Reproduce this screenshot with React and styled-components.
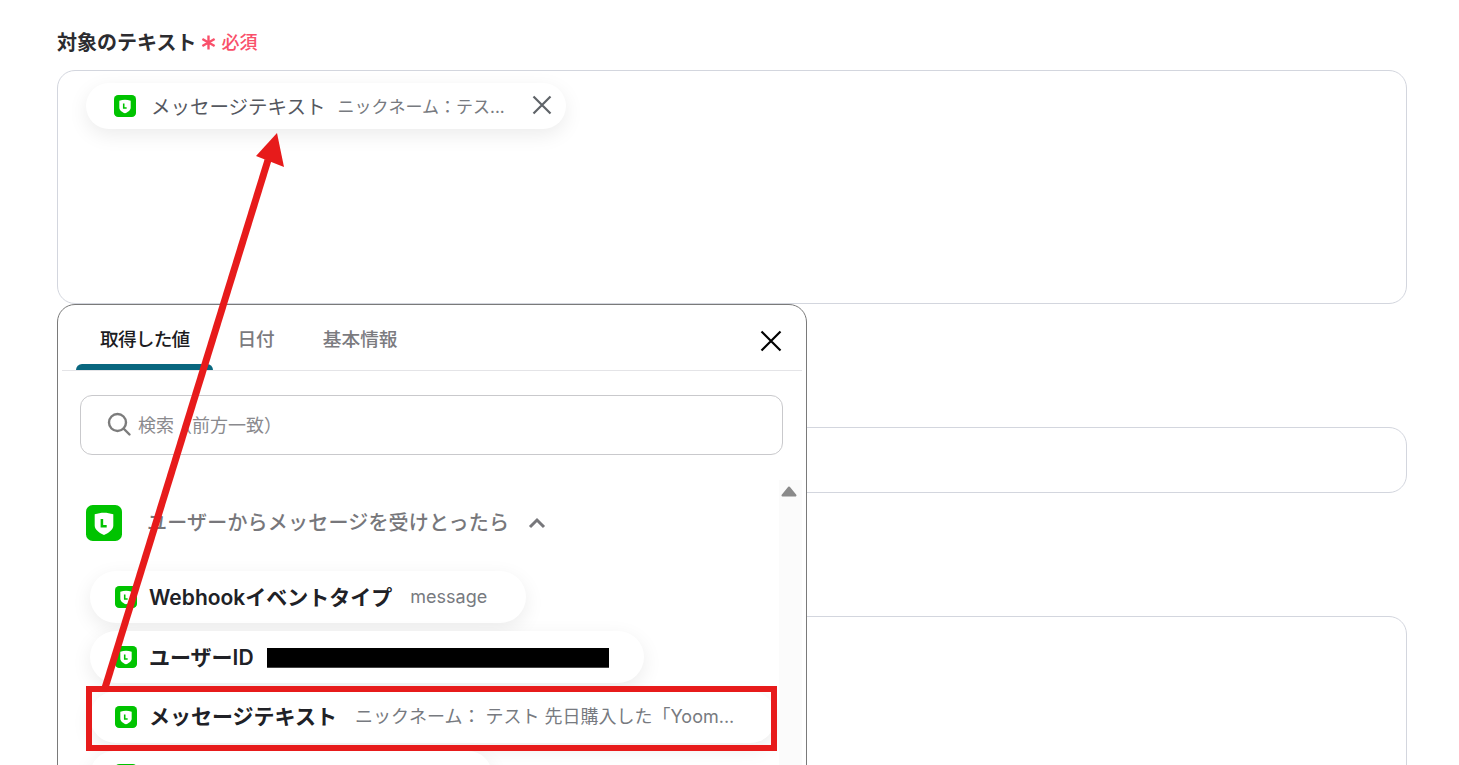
import React from "react";
import styled, { createGlobalStyle } from "styled-components";

const GlobalStyle = createGlobalStyle`
  html, body {
    margin: 0;
    padding: 0;
    background: #fff;
    font-family: "Inter", "Noto Sans CJK JP", sans-serif;
  }
`;

const Page = styled.div`
  position: relative;
  width: 1459px;
  height: 765px;
  overflow: hidden;
  box-sizing: border-box;
  padding: 28px 52px 0 57px;
`;

const Label = styled.div`
  display: flex;
  align-items: center;
  height: 28px;
  margin-bottom: 14px;
  padding-bottom: 2px;
  box-sizing: border-box;
  font-size: 20px;
  font-weight: 700;
  color: #2c2c30;
`;

const Required = styled.span`
  display: flex;
  align-items: center;
  margin-left: 5px;
  font-size: 18px;
  font-weight: 500;
  color: #f9506a;
`;

const Asterisk = styled.svg`
  width: 15px;
  height: 15px;
  margin-right: 5px;
  margin-top: 3px;
`;

const Field = styled.div`
  box-sizing: border-box;
  height: ${(p) => p.$h}px;
  margin-bottom: ${(p) => p.$mb || 0}px;
  border: 1px solid #d3d6de;
  border-radius: 18px;
  padding: ${(p) => (p.$chip ? "12px 28px" : "0")};
`;

const Chip = styled.div`
  display: flex;
  align-items: center;
  box-sizing: border-box;
  width: ${(p) => p.$w}px;
  height: ${(p) => p.$h || 52}px;
  padding-left: ${(p) => p.$pl || 25}px;
  border-radius: 26px;
  background: #fff;
  box-shadow: 0 6px 20px rgba(0, 0, 0, 0.08);
  white-space: nowrap;
`;

const ChipName = styled.span`
  margin-left: ${(p) => p.$ml || 12}px;
  padding-bottom: ${(p) => p.$lift || 2}px;
  font-size: ${(p) => p.$size || 21}px;
  font-weight: ${(p) => p.$weight || 600};
  color: ${(p) => p.$color || "#202126"};
`;

const ChipValue = styled.span`
  margin-left: ${(p) => p.$ml || 18}px;
  padding-bottom: ${(p) => p.$lift || 2}px;
  font-size: ${(p) => p.$size || 18}px;
  color: #777a80;
`;

const RemoveBtn = styled.svg`
  width: 24px;
  height: 24px;
  margin-left: 25px;
  margin-bottom: 2px;
  flex: none;
`;

const Popup = styled.div`
  position: absolute;
  left: 57px;
  top: 304px;
  width: 750px;
  height: 480px;
  box-sizing: border-box;
  background: #fff;
  border: 1px solid #7a7a7a;
  border-radius: 18px 18px 0 0;
  display: flex;
  flex-direction: column;
`;

const TabBar = styled.div`
  display: flex;
  align-items: stretch;
  height: 65px;
  margin: 0 4px;
  padding-left: 14px;
  border-bottom: 1px solid #e4e4e7;
`;

const Tab = styled.div`
  position: relative;
  padding: 21px 24px 0;
  font-size: 18.7px;
  font-weight: 500;
  line-height: 28px;
  letter-spacing: ${(p) => (p.$active ? "-0.8px" : "0")};
  color: ${(p) => (p.$active ? "#1c1c1f" : "#7b7b7f")};
  &::after {
    content: "";
    display: ${(p) => (p.$active ? "block" : "none")};
    position: absolute;
    left: 0;
    right: 0;
    bottom: 0;
    height: 6px;
    border-radius: 6px 6px 0 0;
    background: #09677f;
  }
`;

const CloseBtn = styled.svg`
  width: 28px;
  height: 28px;
  margin-left: auto;
  margin-top: 22px;
  margin-right: 17px;
`;

const SearchBox = styled.div`
  display: flex;
  align-items: center;
  box-sizing: border-box;
  height: 60px;
  margin: 24px 23px 0 22px;
  padding: 0 0 2px 25px;
  border: 1px solid #c9c9cc;
  border-radius: 12px;
  font-size: 18px;
  color: #8a8a8e;
`;

const SearchIcon = styled.svg`
  width: 26px;
  height: 26px;
  margin-right: 6px;
`;

const Body = styled.div`
  display: flex;
  flex: 1;
  margin: 25px 4px 0 0;
  min-height: 0;
`;

const List = styled.div`
  flex: 1;
  padding: 25px 0 0 28px;
`;

const GroupHeader = styled.div`
  display: flex;
  align-items: center;
  height: 36px;
  margin-bottom: 30px;
`;

const GroupTitle = styled.span`
  margin-left: 25px;
  padding-bottom: 3px;
  font-size: 20px;
  font-weight: 500;
  letter-spacing: 0.2px;
  color: #77777b;
`;

const Chevron = styled.svg`
  width: 20px;
  height: 20px;
  margin-left: 18px;
`;

const Redacted = styled.div`
  width: 342px;
  height: 20px;
  margin: 2px 0 0 13px;
  box-sizing: border-box;
  background: #000;
  border-bottom: 1px solid #444;
`;

const Rows = styled.div`
  display: flex;
  flex-direction: column;
  gap: 8px;
  margin-left: 4px;
`;

const Scrollbar = styled.div`
  width: 23px;
  background: #fbfbfb;
  display: flex;
  justify-content: center;
  padding: 6px 3px 0 0;
  box-sizing: border-box;
`;

const ScrollArrow = styled.svg`
  width: 16px;
  height: 11px;
`;

const Overlay = styled.svg`
  position: absolute;
  left: 0;
  top: 0;
  pointer-events: none;
`;

const Highlight = styled.div`
  position: absolute;
  left: 86px;
  top: 686px;
  width: 691px;
  height: 65px;
  box-sizing: border-box;
  border: 6px solid #e71b1b;
`;

const LineIcon = ({ size = 22 }) => (
  <svg width={size} height={size} viewBox="0 0 24 24" style={{ flex: "none" }}>
    <rect width="24" height="24" rx="4.500" fill="#00c300" />
    <path
      d="M5.800 6.200c2.100-.6 4.200-1 6.200-1s4.100.4 6.200 1v7.600c0 2.900-3.600 4.900-6.200 6.200-2.600-1.300-6.200-3.300-6.200-6.200z"
      fill="#fff"
    />
    <path d="M10.600 9.300v4.900h3.200" fill="none" stroke="#00c300" strokeWidth="1.700" />
  </svg>
);

const App = () => {
  return (
    <Page>
      <GlobalStyle />
      <Label>
        対象のテキスト
        <Required>
          <Asterisk viewBox="0 0 14 14">
            <path
              d="M7 .5v13M1.300 3.700l11.400 6.600M12.700 3.700L1.300 10.300"
              stroke="#f9506a"
              strokeWidth="2.200"
              fill="none"
            />
          </Asterisk>
          必須
        </Required>
      </Label>
      <Field $h={234} $mb={123} $chip>
        <Chip $w={480} $h={46} $pl={28}>
          <LineIcon />
          <ChipName $size={19.5} $weight={400} $ml={15} $color="#55585f">
            メッセージテキスト
          </ChipName>
          <ChipValue $ml={12} $size={17}>
            ニックネーム：テス...
          </ChipValue>
          <RemoveBtn viewBox="0 0 24 24">
            <path d="M3.500 3.500l17 17M20.500 3.500l-17 17" stroke="#5f6368" strokeWidth="2.200" fill="none" />
          </RemoveBtn>
        </Chip>
      </Field>
      <Field $h={66} $mb={123} />
      <Field $h={300} />

      <Popup>
        <TabBar>
          <Tab $active>取得した値</Tab>
          <Tab>日付</Tab>
          <Tab>基本情報</Tab>
          <CloseBtn viewBox="0 0 28 28">
            <path d="M4.500 4.500l19 19M23.500 4.500l-19 19" stroke="#000" strokeWidth="2.200" fill="none" />
          </CloseBtn>
        </TabBar>
        <SearchBox>
          <SearchIcon viewBox="0 0 26 26">
            <circle cx="11.500" cy="11.500" r="8.500" stroke="#7c7c7c" strokeWidth="2.400" fill="none" />
            <path d="M17.500 17.500l6 6" stroke="#7c7c7c" strokeWidth="2.400" strokeLinecap="round" />
          </SearchIcon>
          検索（前方一致）
        </SearchBox>
        <Body>
          <List>
            <GroupHeader>
              <LineIcon size={36} />
              <GroupTitle>ユーザーからメッセージを受けとったら</GroupTitle>
              <Chevron viewBox="0 0 20 20">
                <path d="M3 14l7-7 7 7" stroke="#77777b" strokeWidth="3" fill="none" />
              </Chevron>
            </GroupHeader>
            <Rows>
              <Chip $w={436}>
                <LineIcon />
                <ChipName>Webhookイベントタイプ</ChipName>
                <ChipValue>message</ChipValue>
              </Chip>
              <Chip $w={554}>
                <LineIcon />
                <ChipName>ユーザーID</ChipName>
                <Redacted />
              </Chip>
              <Chip $w={686}>
                <LineIcon />
                <ChipName $lift={5}>メッセージテキスト</ChipName>
                <ChipValue $lift={5}>ニックネーム： テスト 先日購入した「Yoom...</ChipValue>
              </Chip>
              <Chip $w={402} $h={48}>
                <LineIcon />
              </Chip>
            </Rows>
          </List>
          <Scrollbar>
            <ScrollArrow viewBox="0 0 16 11">
              <path d="M8 1.500L14.500 9.500H1.500z" fill="#8a8a8a" stroke="#8a8a8a" strokeWidth="2" strokeLinejoin="round" />
            </ScrollArrow>
          </Scrollbar>
        </Body>
      </Popup>

      <Highlight />
      <Overlay width="1459" height="765" viewBox="0 0 1459 765">
        <path d="M105 688L268 160" stroke="#e71b1b" strokeWidth="7" fill="none" />
        <path d="M277 133L256 156L284 167z" fill="#e71b1b" />
      </Overlay>
    </Page>
  );
};

export default App;
